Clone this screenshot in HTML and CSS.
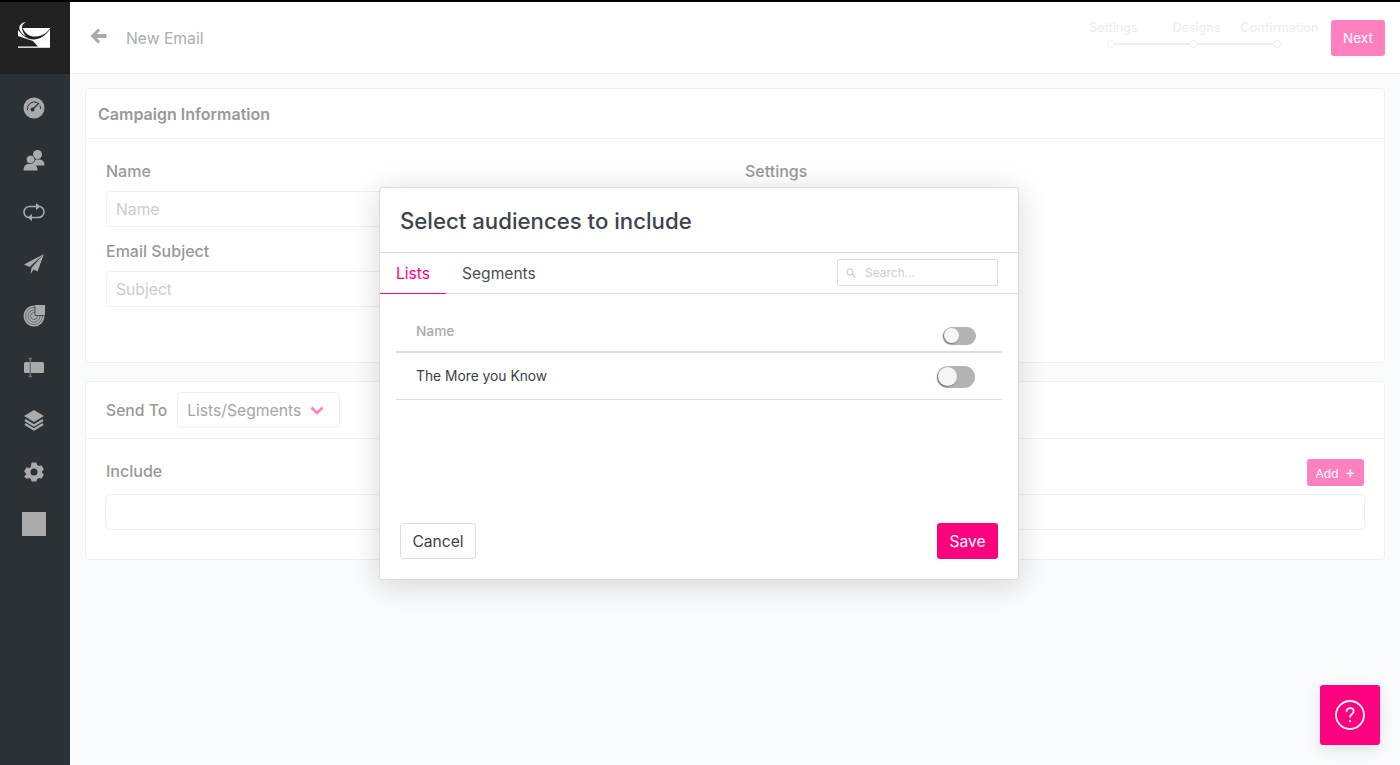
FILE: index.html
```html
<!DOCTYPE html>
<html lang="en">
<head>
<meta charset="utf-8">
<title>New Email</title>
<link rel="stylesheet" href="styles.css">
</head>
<body>
<div class="app">
  <aside class="sidebar">
    <div class="logo">
      <svg width="34" height="28" viewBox="0 0 34 28">
        <path fill="#fff" d="M0 7H32V26.800H0z"/>
        <path fill="#222" d="M0 7h4.500C8 14 13 16 18 15.500 24 15 29 12 32 7.500V8.500C27 15 22 18.500 15.500 18.500 9 18.500 4 14 0 9z"/>
        <path fill="#222" d="M0 15L15 20 20 25.500H0z"/>
        <path fill="#fff" d="M8 1C3.500 1.500.8 4.500 1.500 8 2.300 11 5 14 8 15.500 5.500 12 3.500 9 3.800 6 4.200 3.800 5.800 2 8 1z"/>
      </svg>
    </div>
    <nav class="nav">
      <a class="nav-item"><svg width="22" height="22" viewBox="0 0 22 22"><circle cx="11" cy="11" r="10.500" fill="#aaa"/><path d="M4.500 13a6.800 6.800 0 0 1 10-7.200M16.800 8.500a6.800 6.800 0 0 1 .8 3.500" fill="none" stroke="#2c3135" stroke-width="1"/><path d="M9.500 12.500L16 6" stroke="#2c3135" stroke-width="1.200"/><circle cx="9.500" cy="12.500" r="1.900" fill="#2c3135"/></svg></a>
      <a class="nav-item"><svg width="22" height="22" viewBox="0 0 22 22"><circle cx="14.500" cy="5.500" r="4.500" fill="#aaa"/><path fill="#aaa" d="M8 16c0-3.500 2-5 4-5.500h5c2.500.5 4.500 2 4.500 6H14z"/><circle cx="7.500" cy="10.500" r="4.300" fill="#aaa" stroke="#2c3135" stroke-width=".8"/><path fill="#aaa" d="M.5 21.500c0-4 2-6 4-6.500h6c2 .5 4 2.500 4 6.500z"/></svg></a>
      <a class="nav-item"><svg width="22" height="22" viewBox="0 0 22 22" fill="none" stroke="#aaa" stroke-width="1.500"><path d="M5 16.500C2.500 15.500 1 13.500 1 11c0-3 2.500-5.500 5.500-5.500H14"/><path d="M17 5.500c2.500 1 4 3 4 5.500 0 3-2.500 5.500-5.500 5.500H8"/><path fill="#aaa" stroke="none" d="M13 2l4.500 3.500L13 9zM9 13l-4.500 3.500L9 20z"/></svg></a>
      <a class="nav-item"><svg width="22" height="22" viewBox="0 0 22 22"><path fill="#aaa" d="M21 1L1 11.500l5.500 2.500zM21 1L8.500 14.800 7.500 21l3-4.500 4 2z"/></svg></a>
      <a class="nav-item"><svg width="22" height="22" viewBox="0 0 22 22"><circle cx="11" cy="11" r="10.500" fill="#aaa"/><g fill="none" stroke="#2c3135" stroke-width=".5"><circle cx="11" cy="11" r="8.500"/><circle cx="11" cy="11" r="6"/><circle cx="11" cy="11" r="3.500"/></g><path fill="#aaa" d="M12 0h10v10H12z"/><path d="M12 1v9.500h9.500" fill="none" stroke="#2c3135" stroke-width=".7"/></svg></a>
      <a class="nav-item"><svg width="22" height="22" viewBox="0 0 22 22"><rect x="1" y="5" width="20" height="11" rx="1.500" fill="#aaa"/><path d="M5.500 1.500h3.500M5.500 19.500h3.500M7.300 1.500v18" fill="none" stroke="#6b6e71" stroke-width="1.400"/></svg></a>
      <a class="nav-item"><svg width="22" height="22" viewBox="0 0 22 22"><path fill="#aaa" d="M11 1l10 6-10 6L1 7z"/><path fill="none" stroke="#aaa" stroke-width="2.200" stroke-linejoin="round" d="M2 11l9 5.500 9-5.500M2 15l9 5.500 9-5.500"/></svg></a>
      <a class="nav-item"><svg width="22" height="22" viewBox="0 0 22 22"><path fill="#aaa" fill-rule="evenodd" d="M8.600 1.500h4.800l.8 2.600c.6.200 1.100.5 1.600.9l2.700-.7 2.400 4.200-2 1.900v1.200l2 1.900-2.400 4.200-2.700-.7c-.5.400-1 .7-1.600.9l-.8 2.600H8.600l-.8-2.600c-.6-.2-1.100-.5-1.600-.9l-2.700.7L1.100 15.500l2-1.900v-1.200l-2-1.900L3.500 6.300l2.700.7c.5-.4 1-.7 1.600-.9zM11 7.500a3.500 3.500 0 1 0 0 7 3.500 3.500 0 0 0 0-7z"/></svg></a>
      <a class="nav-item"><span class="avatar"></span></a>
    </nav>
  </aside>

  <div class="main">
    <header class="topbar">
      <div class="title-group">
        <svg class="back" width="17" height="16" viewBox="0 0 17 16"><path fill="#aaa" d="M8 .5l2.200 2.200L6.800 6H16.500v4H6.800l3.400 3.300L8 15.500 .5 8z"/></svg>
        <span class="page-title">New Email</span>
      </div>
      <div class="top-actions">
        <ol class="steps">
          <li class="step"><span>Settings</span><i></i></li>
          <li class="step"><span>Designs</span><i></i></li>
          <li class="step"><span>Confirmation</span><i></i></li>
        </ol>
        <button class="btn-next">Next</button>
      </div>
    </header>

    <section class="card card-info">
      <h2 class="card-head">Campaign Information</h2>
      <div class="info-grid">
        <div class="info-col">
          <label class="label">Name</label>
          <div class="field">Name</div>
          <label class="label label-second">Email Subject</label>
          <div class="field">Subject</div>
        </div>
        <div class="info-col">
          <label class="label">Settings</label>
        </div>
      </div>
    </section>

    <section class="card card-send">
      <div class="send-head">
        <span class="label label-send">Send To</span>
        <div class="select">Lists/Segments
          <svg width="14" height="9" viewBox="0 0 14 9"><path d="M1.500 1.500L7 7l5.500-5.500" fill="none" stroke="#ff80bf" stroke-width="2.500"/></svg>
        </div>
      </div>
      <div class="send-body">
        <div class="include-row">
          <span class="label label-include">Include</span>
          <button class="btn-add">Add <b>+</b></button>
        </div>
        <div class="include-box"></div>
      </div>
    </section>
  </div>
</div>

<div class="modal">
  <h1 class="modal-title">Select audiences to include</h1>
  <div class="tabs">
    <a class="tab tab-active">Lists</a>
    <a class="tab">Segments</a>
    <div class="search">
      <svg width="10" height="10" viewBox="0 0 10 10" fill="none" stroke="#ccc" stroke-width="1.100"><circle cx="4" cy="4" r="3"/><path d="M6.300 6.300L9.500 9.500"/></svg>
      <span>Search...</span>
    </div>
  </div>
  <div class="table">
    <div class="row row-head"><span>Name</span><span class="toggle toggle-sm"></span></div>
    <div class="row row-body"><span>The More you Know</span><span class="toggle toggle-lg"></span></div>
  </div>
  <div class="modal-foot">
    <button class="btn-cancel">Cancel</button>
    <button class="btn-save">Save</button>
  </div>
</div>

<button class="help" aria-label="Help">
  <svg width="32" height="32" viewBox="0 0 32 32" fill="none" stroke="#fff" stroke-width="1.800"><circle cx="16" cy="16" r="14"/><path d="M12.500 12.800c0-2.200 1.600-3.600 3.600-3.600s3.500 1.300 3.500 3.200c0 2.900-3.600 2.900-3.600 6"/><path d="M16 21v2"/></svg>
</button>
</body>
</html>
```

FILE: styles.css
```css
* { box-sizing: border-box; }
html, body { margin: 0; height: 765px; overflow: hidden; }
body { font-family: Inter, "Liberation Sans", sans-serif; background: #fafbfd; color: #999; border-top: 2px solid #000; }
button { font-family: inherit; border: 0; cursor: pointer; }

.app { display: flex; height: 763px; }
.sidebar { width: 70px; flex: none; background: #2c3135; }
.logo { height: 72px; background: #222; display: flex; justify-content: center; padding-top: 19px; }
.nav { display: flex; flex-direction: column; padding-top: 8px; }
.nav-item { height: 52px; width: 68px; display: flex; align-items: center; justify-content: center; }
.avatar { width: 24px; height: 24px; background: #aaa; display: block; }

.main { flex: 1; min-width: 0; }
.topbar { height: 72px; background: #fff; border-bottom: 1px solid #f0f0f0; display: flex; justify-content: space-between; padding: 0 15px 0 20px; }
.title-group { display: flex; align-items: center; }
.back { margin-top: -3px; }
.page-title { margin: 2px 0 0 19px; font-size: 15.700px; color: #a9adb2; }
.top-actions { display: flex; align-items: center; }
.steps { list-style: none; display: flex; align-self: flex-start; margin: 9px 12px 0 0; padding: 0; }
.step { width: 83px; position: relative; text-align: center; height: 38px; font-size: 12.500px; font-weight: 500; color: #eeeeef; padding-top: 9px; white-space: nowrap; }
.step span { position: relative; left: 2px; }
.step i { position: absolute; left: 37px; top: 29px; width: 8px; height: 8px; border-radius: 50%; border: 1.500px solid #eee; background: #fff; z-index: 1; }
.step:not(:last-child)::after { content: ""; position: absolute; left: 41px; top: 32px; width: 84px; height: 2px; background: #eee; }
.btn-next { width: 54px; height: 36px; background: #ff80bf; color: #fff; border-radius: 3px; font-size: 13.500px; }

.card { margin: 0 15px; background: #fff; border: 1px solid #f0f0f0; border-radius: 4px; }
.card-info { height: 275px; margin-top: 14px; }
.card-head { margin: 0; height: 50px; line-height: 50px; padding-left: 12px; font-size: 16px; font-weight: 600; color: #999; border-bottom: 1px solid #f3f3f3; }
.info-grid { display: grid; grid-template-columns: 639px 1fr; padding: 22px 20px 0; }
.label { display: block; font-size: 16px; font-weight: 500; color: #999; line-height: 20px; }
.label-second { margin-top: 14px; }
.label-send { font-size: 15.700px; margin-top: 2px; }
.label-include { align-self: flex-start; line-height: 25px; }
.field { height: 36px; margin-top: 10px; width: 300px; padding-left: 9px; line-height: 36px; font-size: 15.700px; color: #ccc; border: 1px solid #f0f0f0; border-radius: 4px; }

.card-send { height: 179px; margin-top: 18px; }
.send-head { height: 57px; display: flex; align-items: center; padding-left: 20px; border-bottom: 1px solid #f3f3f3; }
.select { width: 163px; height: 36px; margin-left: 10px; padding: 0 15px 0 9px; display: flex; justify-content: space-between; align-items: center; font-size: 15.700px; color: #a6a6a6; border: 1px solid #f0f0f0; border-radius: 4px; }
.send-body { padding: 20px 20px 0; }
.include-row { display: flex; justify-content: space-between; align-items: center; height: 27px; }
.btn-add { width: 57px; height: 27px; background: #ff80bf; color: #fff; font-size: 12px; border-radius: 3px; padding: 0; }
.btn-add b { font-weight: 400; font-size: 16px; line-height: 16px; margin-left: 3px; }
.include-box { height: 36px; margin: 8px -1px 0; border: 1px solid #f0f0f0; border-radius: 4px; }

.modal { position: absolute; left: 379px; top: 187px; width: 640px; height: 393px; background: #fff; border: 1px solid #ddd; border-radius: 3px; box-shadow: 0 5px 30px rgba(0,0,0,.16); color: #3c4146; }
.modal-title { margin: 0; height: 65px; line-height: 66px; padding-left: 20px; font-size: 22.200px; font-weight: 500; color: #3c444d; border-bottom: 1px solid #ddd; }
.tabs { height: 41px; display: flex; position: relative; border-bottom: 1px solid #ddd; }
.tab { height: 41px; line-height: 41px; font-size: 15.600px; color: #4a4f54; padding: 0 16px; }
.tab-active { color: #ff007f; width: 66px; box-shadow: inset 0 -1px 0 #ff007f; }
.search { position: absolute; left: 457px; top: 6px; width: 161px; height: 27px; border: 1px solid #ddd; border-radius: 2px; display: flex; align-items: center; padding-left: 8px; font-size: 12px; color: #ccc; }
.search span { margin-left: 9px; }
.table { margin: 0 16px; }
.row { display: flex; justify-content: space-between; align-items: center; }
.row-head { height: 59px; padding: 16px 26px 0 20px; font-size: 13.700px; font-weight: 500; color: #aaa; border-bottom: 2px solid #ddd; }
.row-body { height: 47px; padding: 0 27px 0 20px; font-size: 13.800px; color: #3c4146; border-bottom: 1px solid #ddd; }
.toggle { width: 38px; height: 22px; border-radius: 11px; background: #b3b3b3; position: relative; display: block; }
.toggle::after { content: ""; position: absolute; left: 1px; top: 1px; width: 19px; height: 19px; border-radius: 50%; background: #f5f5f5; box-shadow: -1px 1px 2px rgba(0,0,0,.4); }
.toggle-lg { margin-top: 2px; }
.toggle-sm { width: 33px; height: 18px; margin-top: 10px; }
.toggle-sm::after { width: 15px; height: 15px; }
.modal-foot { display: flex; justify-content: space-between; padding: 123px 20px 0; }
.btn-cancel { width: 76px; height: 36px; background: #fff; border: 1px solid #ddd; border-radius: 3px; font-size: 15.600px; color: #3c4146; padding: 0; }
.btn-save { width: 61px; height: 36px; background: #ff007f; color: #fff; border-radius: 3px; font-size: 15.600px; padding: 0; }

.help { position: absolute; left: 1320px; top: 685px; width: 60px; height: 60px; background: #ff007f; border-radius: 3px; display: flex; align-items: center; justify-content: center; padding: 0; box-shadow: 0 5px 15px rgba(0,0,0,.1); }
```
